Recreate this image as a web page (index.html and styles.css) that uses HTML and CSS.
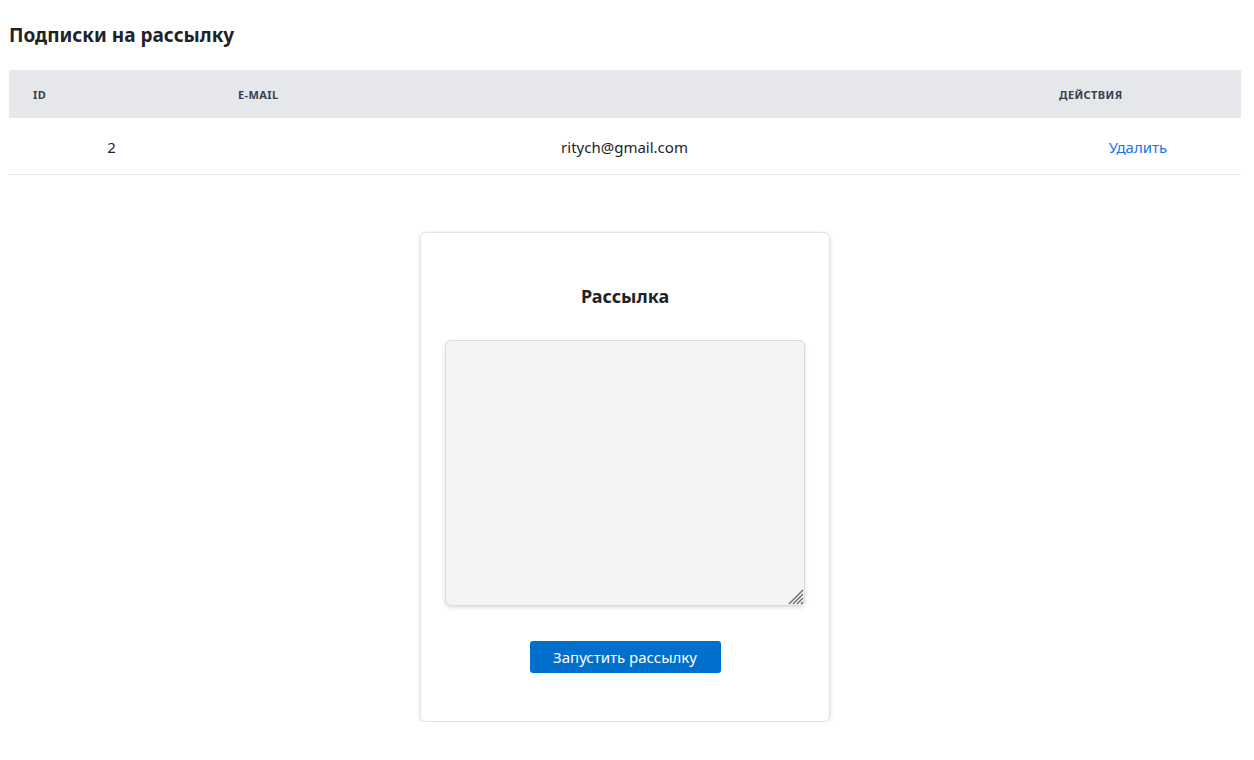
FILE: index.html
```html
<!DOCTYPE html>
<html lang="ru">
<head>
<meta charset="utf-8">
<title>Подписки на рассылку</title>
<link rel="stylesheet" href="styles.css">
</head>
<body>
<div class="page">
  <h1 class="page-title">Подписки на рассылку</h1>
  <table class="subs">
    <thead>
      <tr>
        <th class="col-id">ID</th>
        <th class="col-email">E-mail</th>
        <th class="col-actions">Действия</th>
      </tr>
    </thead>
    <tbody>
      <tr>
        <td>2</td>
        <td>ritych@gmail.com</td>
        <td><a class="link" href="#">Удалить</a></td>
      </tr>
    </tbody>
  </table>

  <div class="card-wrap">
    <div class="card">
      <h2 class="card-title">Рассылка</h2>
      <div class="message-box">
        <textarea class="message"></textarea>
        <svg class="grip" width="16" height="16" viewBox="0 0 16 16" aria-hidden="true">
          <path d="M1 15 L15 1 M5 15 L15 5 M9 15 L15 9 M13 15 L15 13" stroke="#6b6b6b" stroke-width="1.4" fill="none"/>
        </svg>
      </div>
      <button class="btn" type="button">Запустить рассылку</button>
    </div>
  </div>
</div>
</body>
</html>
```
FILE: styles.css
```css
* { box-sizing: border-box; }
html, body { margin: 0; padding: 0; background: #fff; }
body {
  font-family: "Noto Sans", "Open Sans", "Liberation Sans", sans-serif;
  color: #1f2328;
}
.page { padding: 22px 13px 0 9px; }
.page-title {
  margin: 0 0 22px;
  font-size: 19px;
  line-height: 26px;
  font-weight: 700;
  color: #1f2328;
}
.subs {
  width: 100%;
  border-collapse: collapse;
  table-layout: fixed;
}
.subs th {
  background: #e5e7eb;
  height: 48px;
  padding: 0 24px;
  text-align: left;
  font-size: 11px;
  font-weight: 700;
  text-transform: uppercase;
  color: #374151;
  letter-spacing: 0.4px;
}
.col-id { width: 205px; }
.col-actions { width: 206px; }
.subs td {
  height: 56px;
  padding: 2px 24px 0;
  text-align: center;
  font-size: 15px;
  color: #1f2328;
  border-bottom: 1px solid #e5e7eb;
}
.link { color: #1a73e8; text-decoration: none; }
.card-wrap {
  display: flex;
  justify-content: center;
  padding-top: 57px;
}
.card {
  width: 410px;
  height: 490px;
  border: 1px solid #e2e4e8;
  border-radius: 6px;
  box-shadow: 0 1px 4px rgba(0,0,0,0.14);
  padding: 51px 24px 0;
  display: flex;
  flex-direction: column;
  align-items: center;
}
.card-title {
  margin: 0 0 32px;
  font-size: 18px;
  line-height: 24px;
  font-weight: 700;
  color: #1f2328;
}
.message-box {
  position: relative;
  width: 360px;
  height: 266px;
}
.message {
  display: block;
  width: 360px;
  height: 266px;
  background: #f3f4f6;
  border: 1px solid #d9dbe0;
  border-radius: 6px;
  box-shadow: 0 2px 4px rgba(0,0,0,0.12);
  resize: none;
  font-family: inherit;
}
.grip {
  position: absolute;
  right: 1px;
  bottom: 1px;
  pointer-events: none;
}
.btn {
  margin-top: 35px;
  width: 191px;
  height: 32px;
  border: none;
  border-radius: 3px;
  background: #0070cc;
  color: #fff;
  font-family: inherit;
  font-size: 15px;
  cursor: pointer;
}
```
